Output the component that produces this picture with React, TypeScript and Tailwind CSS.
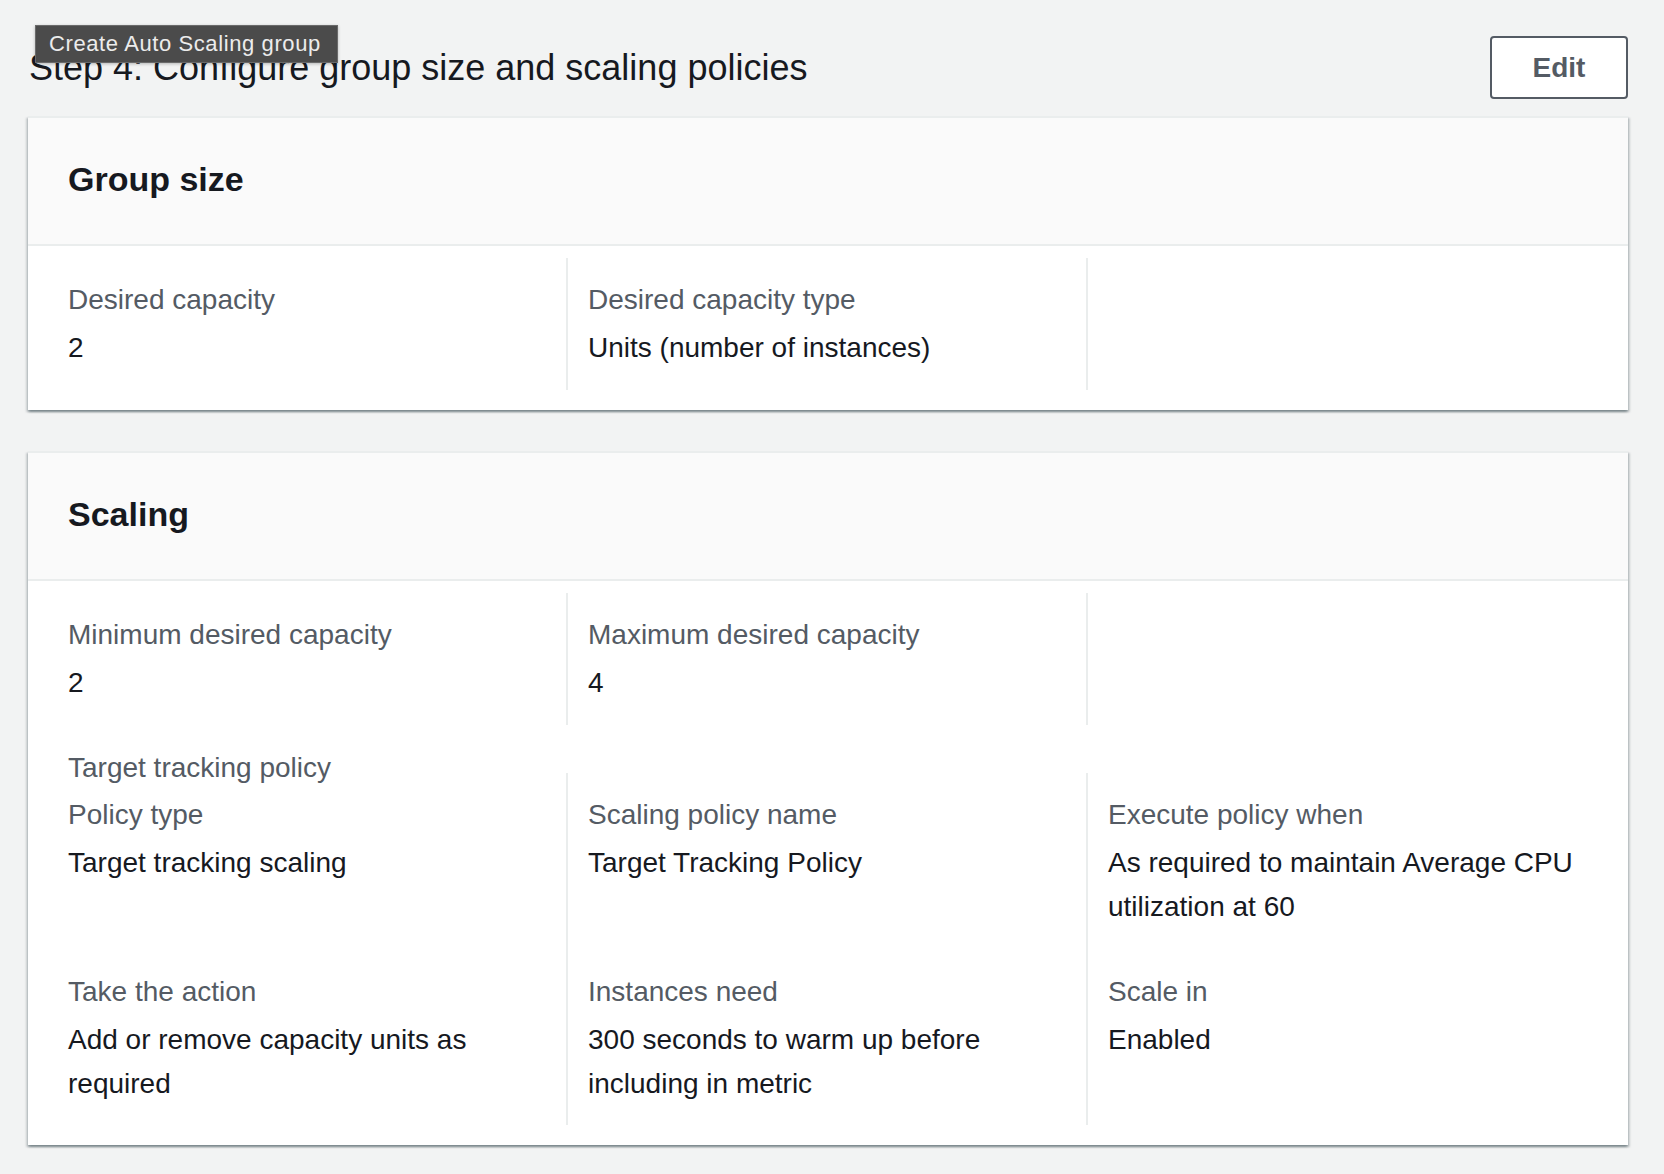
import React from "react";

const LABEL = "text-[28px] leading-[44px] text-[#545b64]";
const VALUE = "mt-[4px] text-[28px] leading-[44px] text-[#16191f]";

function Item({ label, value }: { label: string; value?: string }) {
  return (
    <div>
      <div className={LABEL}>{label}</div>
      {value !== undefined && <div className={VALUE}>{value}</div>}
    </div>
  );
}

function Card({ title, children, className = "" }: { title: string; children: React.ReactNode; className?: string }) {
  return (
    <div
      className={
        "bg-white border-t-2 border-[#eaeded] shadow-[0_2px_2px_0_rgba(0,28,36,0.3),2px_2px_2px_0_rgba(0,28,36,0.15),-2px_2px_2px_0_rgba(0,28,36,0.15)] " +
        className
      }
    >
      <div className="h-[128px] bg-[#fafafa] border-b-2 border-[#eaeded] flex items-center px-[40px] pb-[5px]">
        <h2 className="text-[34px] leading-[44px] font-bold text-[#16191f]">{title}</h2>
      </div>
      <div className="pl-[18px] pr-[22px] pt-[12px] pb-[20px]">{children}</div>
    </div>
  );
}

export default function App() {
  return (
    <div className="relative min-h-[1174px] bg-[#f2f3f3] font-['Liberation_Sans',Arial,sans-serif]">
      <div className="pl-[28px] pr-[36px] pt-[36px]">
        <div className="flex h-[63px] items-center justify-between">
          <h1 className="pl-[1px] text-[36px] leading-[44px] font-normal text-[#16191f]">
            Step 4: Configure group size and scaling policies
          </h1>
          <button className="h-[63px] w-[138px] rounded-[4px] border-2 border-[#545b64] bg-white text-[28px] font-bold text-[#545b64]">
            Edit
          </button>
        </div>

        <Card title="Group size" className="mt-[17px]">
          <div className="grid grid-cols-3">
            <div className="border-l-2 border-transparent pl-[20px] pr-[20px] py-[20px]">
              <Item label="Desired capacity" value="2" />
            </div>
            <div className="border-l-2 border-[#eaeded] pl-[20px] pr-[20px] py-[20px]">
              <Item label="Desired capacity type" value="Units (number of instances)" />
            </div>
            <div className="border-l-2 border-[#eaeded] pl-[20px] pr-[20px] py-[20px]" />
          </div>
        </Card>

        <Card title="Scaling" className="mt-[41px]">
          <div className="grid grid-cols-3">
            <div className="border-l-2 border-transparent pl-[20px] pr-[20px] py-[20px]">
              <Item label="Minimum desired capacity" value="2" />
            </div>
            <div className="border-l-2 border-[#eaeded] pl-[20px] pr-[20px] py-[20px]">
              <Item label="Maximum desired capacity" value="4" />
            </div>
            <div className="border-l-2 border-[#eaeded] pl-[20px] pr-[20px] py-[20px]" />
          </div>

          <div className={"mt-[21px] pl-[22px] " + LABEL}>Target tracking policy</div>

          <div className="relative -mt-[17px] grid grid-cols-3">
            <div className="border-l-2 border-transparent pl-[20px] pr-[20px] pt-[20px] pb-[21px]">
              <Item label="Policy type" value="Target tracking scaling" />
            </div>
            <div className="border-l-2 border-[#eaeded] pl-[20px] pr-[20px] pt-[20px] pb-[21px]">
              <Item label="Scaling policy name" value="Target Tracking Policy" />
            </div>
            <div className="border-l-2 border-[#eaeded] pl-[20px] pr-[20px] pt-[20px] pb-[21px]">
              <Item label="Execute policy when" value="As required to maintain Average CPU utilization at 60" />
            </div>
            <div className="border-l-2 border-transparent pl-[20px] pr-[20px] pt-[20px] pb-[19px]">
              <Item label="Take the action" value="Add or remove capacity units as required" />
            </div>
            <div className="border-l-2 border-[#eaeded] pl-[20px] pr-[20px] pt-[20px] pb-[19px]">
              <Item label="Instances need" value="300 seconds to warm up before including in metric" />
            </div>
            <div className="border-l-2 border-[#eaeded] pl-[20px] pr-[20px] pt-[20px] pb-[19px]">
              <Item label="Scale in" value="Enabled" />
            </div>
          </div>
        </Card>
      </div>

      <div className="absolute left-[35px] top-[25px] z-10 flex h-[38px] w-[303px] items-center border border-[#6a6a6a] bg-[#4b4b4b] pl-[13px] text-[22px] leading-none tracking-[0.6px] text-[#ececec] shadow-[0_1px_3px_rgba(0,0,0,0.25)]">
        Create Auto Scaling group
      </div>
    </div>
  );
}
